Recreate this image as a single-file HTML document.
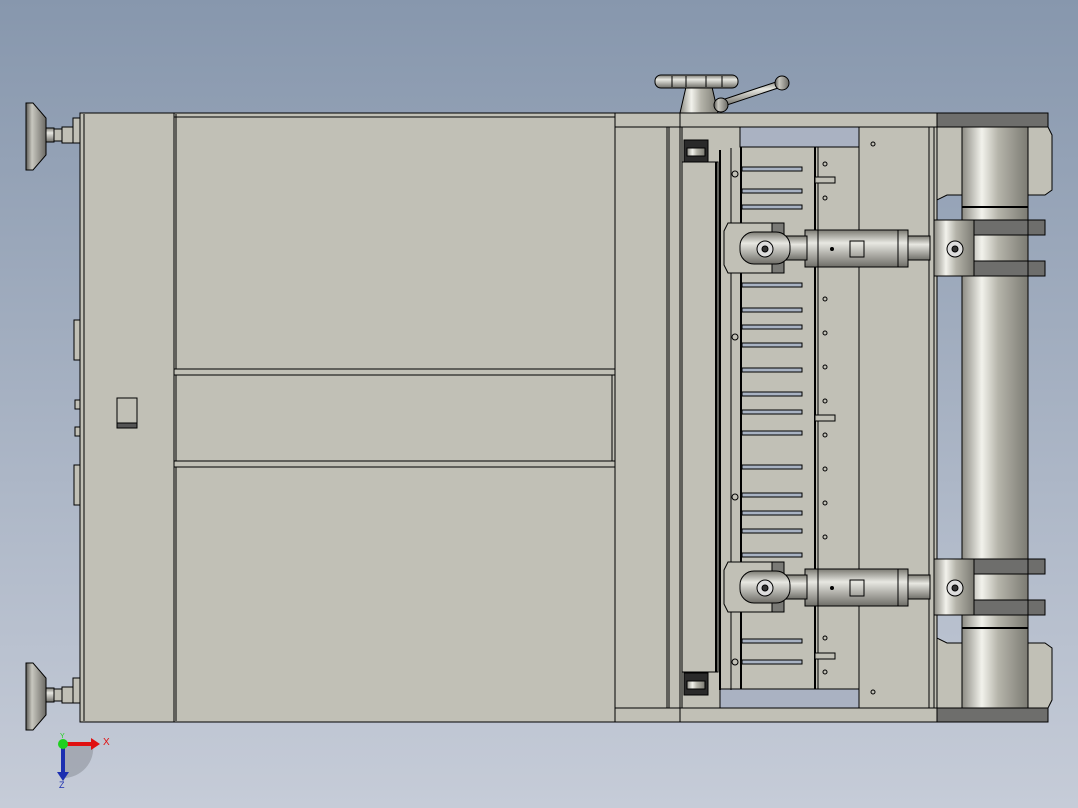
<!DOCTYPE html>
<html><head><meta charset="utf-8"><style>
html,body{margin:0;padding:0;width:1078px;height:808px;overflow:hidden}
</style></head><body>
<svg width="1078" height="808" viewBox="0 0 1078 808" xmlns="http://www.w3.org/2000/svg" stroke="#000" stroke-width="1">
<defs>
<linearGradient id="bg" x1="0" y1="0" x2="0" y2="1"><stop offset="0" stop-color="#8797ad"/><stop offset="1" stop-color="#c6ccd8"/></linearGradient>
<linearGradient id="cyl" x1="0" y1="0" x2="1" y2="0"><stop offset="0" stop-color="#8c8b83"/><stop offset=".3" stop-color="#f2f2ec"/><stop offset=".55" stop-color="#b5b4aa"/><stop offset="1" stop-color="#7c7b73"/></linearGradient>
<linearGradient id="rod" x1="0" y1="0" x2="0" y2="1"><stop offset="0" stop-color="#7c7b73"/><stop offset=".35" stop-color="#e8e8e2"/><stop offset="1" stop-color="#6f6e68"/></linearGradient>
<linearGradient id="foot" x1="0" y1="0" x2="1" y2="0"><stop offset="0" stop-color="#5a5955"/><stop offset=".3" stop-color="#c8c7bf"/><stop offset="1" stop-color="#6a6964"/></linearGradient>
</defs>
<rect width="1078" height="808" fill="url(#bg)" stroke="none"/>
<g fill="#c1c0b6">
<!-- feet -->
<g id="ft">
<path d="M26 103 L33 103 L46 118 L46 155 L33 170 L26 170 Z" fill="url(#foot)"/>
<rect x="46" y="128" width="8" height="14" fill="url(#rod)"/>
<rect x="54" y="129" width="8" height="12"/>
<rect x="62" y="131" width="6" height="8" fill="url(#rod)"/>
<rect x="62" y="127" width="11" height="16"/>
<rect x="73" y="118" width="7" height="25"/>
</g>
<use href="#ft" transform="translate(0,560)"/>
<!-- left box -->
<rect x="80" y="113" width="94" height="609"/>
<line x1="84" y1="114" x2="84" y2="721"/>
<rect x="74" y="320" width="6" height="40"/><rect x="74" y="465" width="6" height="40"/>
<rect x="75" y="400" width="5" height="9"/><rect x="75" y="427" width="5" height="9"/>
<rect x="117" y="398" width="20" height="30"/><rect x="117" y="423" width="20" height="5" fill="#555"/>
<!-- main panel -->
<rect x="174" y="113" width="441" height="609"/>
<line x1="176" y1="114" x2="176" y2="721"/>
<line x1="174" y1="117" x2="615" y2="117"/>
<rect x="174" y="369" width="441" height="6"/>
<rect x="174" y="461" width="441" height="6"/>
<line x1="612" y1="375" x2="612" y2="461"/>
<!-- frame -->
<rect x="615" y="113" width="65" height="609"/>
<rect x="615" y="113" width="322" height="14"/>
<rect x="615" y="708" width="322" height="14"/>
<line x1="680" y1="113" x2="680" y2="127"/><line x1="680" y1="708" x2="680" y2="722"/>
<rect x="937" y="113" width="111" height="14" fill="#6e6e6c"/>
<rect x="937" y="708" width="111" height="14" fill="#6e6e6c"/>
<rect x="680" y="127" width="257" height="581"/>
<rect x="740" y="127" width="119" height="20" fill="#aab2c2"/>
<rect x="720" y="689" width="139" height="19" fill="#aab2c2"/>
<line x1="667" y1="127" x2="667" y2="708"/><line x1="669" y1="127" x2="669" y2="708"/>
<line x1="682" y1="127" x2="682" y2="708"/>
<rect x="682" y="162" width="36" height="510"/>
<line x1="716" y1="162" x2="716" y2="672" stroke-width="2"/>
<line x1="720" y1="150" x2="720" y2="690" stroke-width="2"/>
<line x1="731" y1="148" x2="731" y2="690"/>
<line x1="741" y1="147" x2="741" y2="689" stroke-width="2"/>
<line x1="815" y1="147" x2="815" y2="689" stroke-width="2"/>
<line x1="818" y1="147" x2="818" y2="689"/>
<line x1="859" y1="127" x2="859" y2="708"/>
<line x1="929" y1="127" x2="929" y2="708"/>
<line x1="934" y1="127" x2="934" y2="708"/>
<!-- rollers top/bottom -->
<rect x="684" y="140" width="24" height="22" fill="#2a2a2a"/><rect x="687" y="148" width="18" height="8" fill="url(#cyl)"/>
<rect x="684" y="673" width="24" height="22" fill="#2a2a2a"/><rect x="687" y="681" width="18" height="8" fill="url(#cyl)"/>
<!-- slats -->
<g fill="#a8b2c2">
<rect x="742" y="167" width="60" height="4"/><rect x="742" y="189" width="60" height="4"/><rect x="742" y="205" width="60" height="4"/>
<rect x="742" y="283" width="60" height="4"/><rect x="742" y="308" width="60" height="4"/><rect x="742" y="325" width="60" height="4"/><rect x="742" y="343" width="60" height="4"/><rect x="742" y="368" width="60" height="4"/><rect x="742" y="392" width="60" height="4"/><rect x="742" y="410" width="60" height="4"/><rect x="742" y="431" width="60" height="4"/><rect x="742" y="465" width="60" height="4"/><rect x="742" y="493" width="60" height="4"/><rect x="742" y="511" width="60" height="4"/><rect x="742" y="529" width="60" height="4"/><rect x="742" y="553" width="60" height="4"/>
<rect x="742" y="639" width="60" height="4"/><rect x="742" y="660" width="60" height="4"/>
</g>
<rect x="815" y="177" width="20" height="6"/><rect x="815" y="415" width="20" height="6"/><rect x="815" y="653" width="20" height="6"/>
<g fill="none"><circle cx="735" cy="174" r="3"/><circle cx="735" cy="337" r="3"/><circle cx="735" cy="497" r="3"/><circle cx="735" cy="662" r="3"/>
<circle cx="825" cy="164" r="2"/><circle cx="825" cy="198" r="2"/><circle cx="825" cy="299" r="2"/><circle cx="825" cy="333" r="2"/><circle cx="825" cy="367" r="2"/><circle cx="825" cy="401" r="2"/><circle cx="825" cy="435" r="2"/><circle cx="825" cy="469" r="2"/><circle cx="825" cy="503" r="2"/><circle cx="825" cy="537" r="2"/><circle cx="825" cy="638" r="2"/><circle cx="825" cy="672" r="2"/>
<circle cx="873" cy="144" r="2"/><circle cx="873" cy="692" r="2"/><circle cx="1035" cy="144" r="2"/><circle cx="1035" cy="692" r="2"/></g>
<!-- right bracket blocks -->
<path d="M937 127 L1028 127 L1028 195 L947 195 L937 200 Z"/>
<path d="M1028 127 L1048 127 L1052 135 L1052 190 L1045 195 L1028 195 Z"/>
<path d="M937 708 L1028 708 L1028 643 L947 643 L937 638 Z"/>
<path d="M1028 708 L1048 708 L1052 700 L1052 648 L1045 643 L1028 643 Z"/>
<!-- cylinder -->
<rect x="962" y="127" width="66" height="581" fill="url(#cyl)"/>
<line x1="962" y1="207" x2="1028" y2="207" stroke-width="2"/><line x1="962" y1="628" x2="1028" y2="628" stroke-width="2"/>
<!-- joints -->
<g id="jt">
<rect x="1028" y="220" width="17" height="15" fill="#6e6e6c"/><rect x="1028" y="261" width="17" height="15" fill="#6e6e6c"/>
<rect x="968" y="220" width="60" height="15" fill="#6e6e6c"/><rect x="968" y="261" width="60" height="15" fill="#6e6e6c"/>
<rect x="934" y="220" width="40" height="56" fill="url(#cyl)"/>
<rect x="900" y="236" width="30" height="24" fill="url(#rod)"/>
<rect x="805" y="230" width="103" height="37" fill="url(#rod)"/>
<line x1="818" y1="230" x2="818" y2="267"/><line x1="898" y1="230" x2="898" y2="267"/>
<rect x="850" y="241" width="14" height="16" fill="none"/>
<circle cx="832" cy="249" r="1.5" fill="#000"/>
<rect x="785" y="236" width="22" height="24" fill="url(#rod)"/>
<path d="M728 223 L772 223 L772 273 L728 273 L724 265 L724 231 Z"/>
<rect x="772" y="223" width="12" height="50" fill="#7a7a76"/>
<rect x="740" y="232" width="50" height="32" rx="14" fill="url(#rod)"/>
<circle cx="765" cy="249" r="8" fill="#ddd"/><circle cx="765" cy="249" r="3" fill="#333"/>
<circle cx="955" cy="249" r="8" fill="#ddd"/><circle cx="955" cy="249" r="3" fill="#333"/>
</g>
<use href="#jt" transform="translate(0,339)"/>
<!-- handwheel -->
<path d="M686 87 L712 87 L718 113 L680 113 Z" fill="url(#cyl)"/>
<rect x="655" y="75" width="83" height="13" rx="6" fill="url(#rod)"/>
<line x1="672" y1="76" x2="672" y2="87"/><line x1="686" y1="76" x2="686" y2="87"/><line x1="706" y1="76" x2="706" y2="87"/><line x1="722" y1="76" x2="722" y2="87"/>
<path d="M722 100 L782 80 L784 86 L724 106 Z" fill="url(#rod)"/>
<circle cx="782" cy="83" r="7" fill="url(#foot)"/>
<circle cx="721" cy="105" r="7" fill="url(#foot)"/>
</g>
<!-- triad -->
<path d="M63 744 L63 778 A30 30 0 0 0 93 744 Z" fill="#8f949c" stroke="none" opacity=".6"/>
<rect x="61" y="742" width="4" height="30" fill="#1c2fb0" stroke="none"/>
<path d="M57 772 L69 772 L63 781 Z" fill="#1c2fb0" stroke="none"/>
<rect x="63" y="742" width="30" height="4" fill="#e01010" stroke="none"/>
<path d="M91 738 L100 744 L91 750 Z" fill="#e01010" stroke="none"/>
<circle cx="63" cy="744" r="5" fill="#1ed01e" stroke="none"/>
<text x="103" y="745" font-family="Liberation Sans, sans-serif" font-size="10" fill="#e01010" stroke="none">X</text>
<text x="59" y="788" font-family="Liberation Sans, sans-serif" font-size="9" fill="#1c2fb0" stroke="none">Z</text>
<text x="60" y="738" font-family="Liberation Sans, sans-serif" font-size="7" fill="#1ed01e" stroke="none">Y</text>
</svg>
</body></html>
